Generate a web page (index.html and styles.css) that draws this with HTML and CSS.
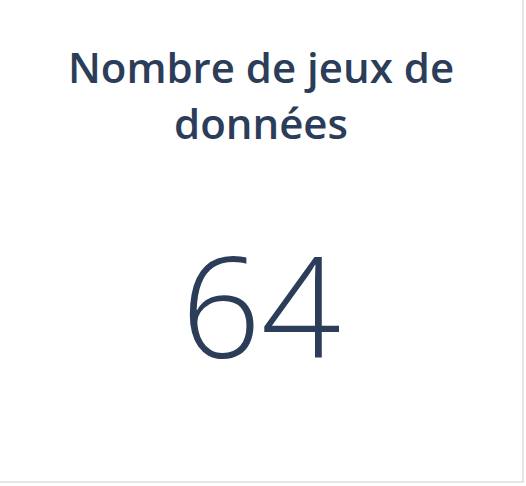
FILE: index.html
```html
<!DOCTYPE html>
<html lang="fr">
<head>
<meta charset="utf-8">
<title>Nombre de jeux de données</title>
<link rel="stylesheet" href="styles.css">
</head>
<body>
<div class="card">
  <h2 class="card-title">Nombre de jeux de données</h2>
  <div class="card-value">64</div>
</div>
</body>
</html>
```
FILE: styles.css
```css
html, body {
  margin: 0;
  padding: 0;
  background: #ffffff;
}
.card {
  box-sizing: content-box;
  width: 522px;
  height: 481px;
  border-right: 2px solid #e6e6e6;
  border-bottom: 2px solid #e6e6e6;
  background: #ffffff;
  display: flex;
  flex-direction: column;
  align-items: center;
  padding: 0;
  color: #2b3d58;
  font-family: "Open Sans", "Liberation Sans", sans-serif;
}
.card-title {
  margin: 39px 0 0;
  padding: 0 50px;
  font-size: 42px;
  font-weight: 600;
  line-height: 56px;
  text-align: center;
}
.card-value {
  margin-top: 83px;
  font-size: 140px;
  font-weight: 300;
  line-height: 140px;
  text-align: center;
}
```
